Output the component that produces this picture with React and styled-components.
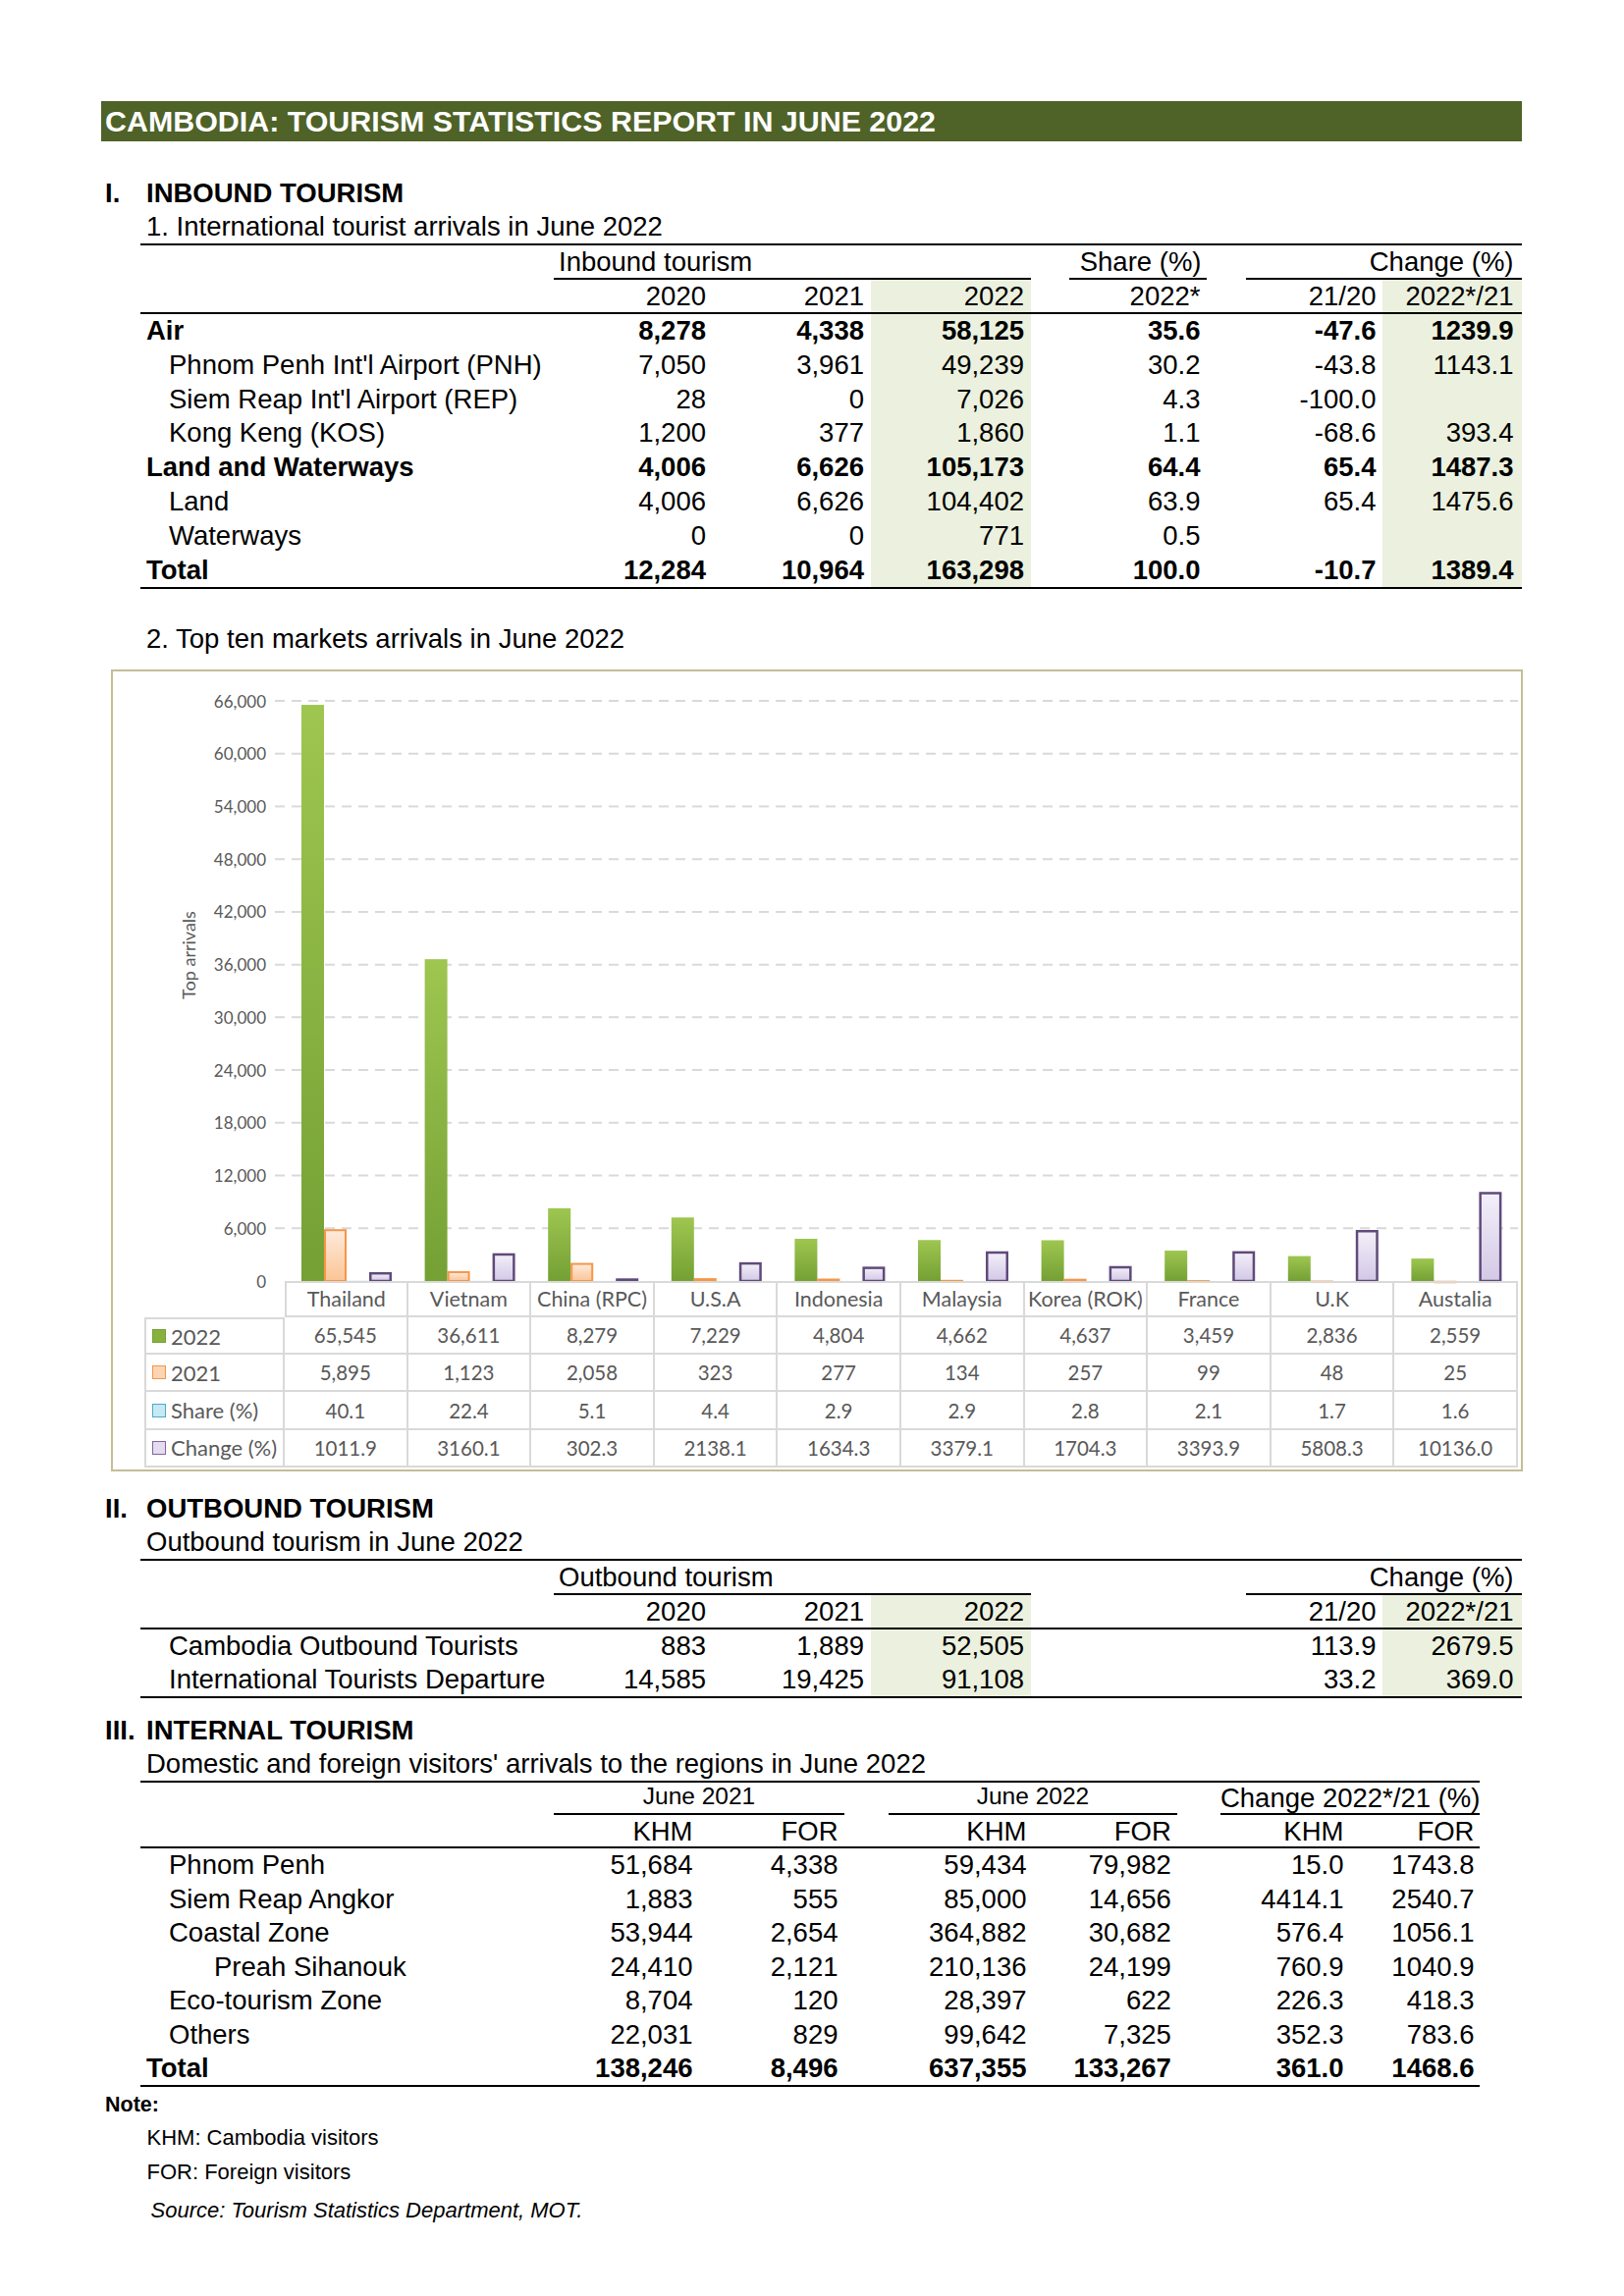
import React from 'react';
import styled, { createGlobalStyle } from 'styled-components';

const colors = {
  olive: '#4f6228',
  shade: '#ebf1de',
  chartText: '#595959',
  grid: '#d9d9d9',
  frame: '#c4bd97',
};

const GlobalStyle = createGlobalStyle`
  html, body { margin: 0; padding: 0; background: #fff; }
  body { font-family: "Liberation Sans", Arial, sans-serif; color: #000; }
  * { box-sizing: border-box; }
`;

const Page = styled.div`
  width: 1654px;
  min-height: 2339px;
  padding: 103px 104px 0 103px;
`;

const TitleBar = styled.h1`
  margin: 0;
  height: 41px;
  padding-left: 4px;
  background: ${colors.olive};
  color: #fff;
  font-size: 30.4px;
  font-weight: 700;
  line-height: 41px;
  white-space: nowrap;
`;

const SectionHead = styled.h2`
  display: flex;
  margin: ${(p) => p.$top}px 0 0;
  padding-left: 4px;
  font-size: 27.5px;
  font-weight: 700;
  line-height: 35px;
`;

const Numeral = styled.span`
  width: 42px;
  flex: none;
`;

const Subtitle = styled.div`
  margin-top: ${(p) => p.$top || 0}px;
  padding-left: 46px;
  font-size: 27.5px;
  line-height: ${(p) => p.$lh || 34}px;
  white-space: nowrap;
`;

const Table = styled.div`
  display: grid;
  grid-template-columns: ${(p) => p.$cols};
  width: max-content;
  margin-left: 40px;
  border-top: 2px solid #000;
  border-bottom: 2px solid #000;
  font-size: 27.5px;
  white-space: nowrap;
`;

const Cell = styled.div`
  grid-column: span ${(p) => p.$span || 1};
  height: ${(p) => p.$h}px;
  padding: ${(p) => p.$pt || 0}px ${(p) => p.$pr ?? 6.5}px 0 ${(p) => p.$pl || 0}px;
  line-height: ${(p) => p.$lh || p.$h}px;
  font-size: ${(p) => (p.$fs ? `${p.$fs}px` : 'inherit')};
  font-weight: ${(p) => (p.$bold ? 700 : 400)};
  text-align: ${(p) => p.$align || 'right'};
  background: ${(p) => (p.$shaded ? colors.shade : 'transparent')};
  border-bottom: ${(p) => (p.$line ? '2px solid #000' : 'none')};
`;

/* ---------- chart ---------- */

const ChartBox = styled.div`
  display: flex;
  flex-direction: column;
  width: 1438px;
  height: 817px;
  margin: 13.5px 0 0 10px;
  border: 2px solid ${colors.frame};
`;

const Plot = styled.svg`
  display: block;
  flex: none;
  overflow: visible;
`;

const AxisText = styled.text`
  font-family: Lato, "Open Sans", sans-serif;
  font-size: ${(p) => p.$fs || 17}px;
  fill: ${colors.chartText};
`;

const DataGrid = styled.div`
  display: grid;
  grid-template-columns: 32px 143px repeat(10, 125.6px);
  grid-template-rows: 37px repeat(4, 38.3px);
  font-family: Lato, "Open Sans", sans-serif;
  font-size: 20.5px;
  color: ${colors.chartText};
  white-space: nowrap;
`;

const Blank = styled.div``;

const GridCell = styled.div`
  display: flex;
  align-items: center;
  justify-content: ${(p) => (p.$legend ? 'flex-start' : 'center')};
  font-size: ${(p) => (p.$fs ? `${p.$fs}px` : 'inherit')};
  border-right: 2px solid ${colors.grid};
  border-bottom: 2px solid ${colors.grid};
  border-top: ${(p) => (p.$top ? `2px solid ${colors.grid}` : 'none')};
  border-left: ${(p) => (p.$left ? `2px solid ${colors.grid}` : 'none')};
`;

const Key = styled.span`
  flex: none;
  width: 14px;
  height: 14px;
  margin: 0 5px 0 6px;
  background: ${(p) => p.$fill};
  border: 1.5px solid ${(p) => p.$stroke};
`;

/* ---------- notes ---------- */

const Note = styled.div`
  padding-left: ${(p) => p.$pl || 0}px;
  margin-top: ${(p) => p.$top || 0}px;
  font-size: ${(p) => p.$fs || 22}px;
  font-weight: ${(p) => (p.$bold ? 700 : 400)};
  font-style: ${(p) => (p.$italic ? 'italic' : 'normal')};
  line-height: ${(p) => p.$lh || 35}px;
`;

/* ---------- data ---------- */

const T1_COLS = '421px 161.5px 161px 163px 39.5px 140px 39.5px 139.5px 141.5px';
const T3_COLS = '421px 148px 148px 44.6px 147.4px 147.3px 43.7px 132px 132px';
const INDENT = [6, 29, 75];

const inbound = [
  { label: 'Air', bold: true, v: ['8,278', '4,338', '58,125', '', '35.6', '', '-47.6', '1239.9'] },
  { label: "Phnom Penh Int'l Airport (PNH)", indent: 1, v: ['7,050', '3,961', '49,239', '', '30.2', '', '-43.8', '1143.1'] },
  { label: "Siem Reap Int'l Airport (REP)", indent: 1, v: ['28', '0', '7,026', '', '4.3', '', '-100.0', ''] },
  { label: 'Kong Keng (KOS)', indent: 1, v: ['1,200', '377', '1,860', '', '1.1', '', '-68.6', '393.4'] },
  { label: 'Land and Waterways', bold: true, v: ['4,006', '6,626', '105,173', '', '64.4', '', '65.4', '1487.3'] },
  { label: 'Land', indent: 1, v: ['4,006', '6,626', '104,402', '', '63.9', '', '65.4', '1475.6'] },
  { label: 'Waterways', indent: 1, v: ['0', '0', '771', '', '0.5', '', '', ''] },
  { label: 'Total', bold: true, v: ['12,284', '10,964', '163,298', '', '100.0', '', '-10.7', '1389.4'] },
];

const outbound = [
  { label: 'Cambodia Outbound Tourists', indent: 1, v: ['883', '1,889', '52,505', '', '', '', '113.9', '2679.5'] },
  { label: 'International Tourists Departure', indent: 1, v: ['14,585', '19,425', '91,108', '', '', '', '33.2', '369.0'] },
];

const internal = [
  { label: 'Phnom Penh', indent: 1, v: ['51,684', '4,338', '', '59,434', '79,982', '', '15.0', '1743.8'] },
  { label: 'Siem Reap Angkor', indent: 1, v: ['1,883', '555', '', '85,000', '14,656', '', '4414.1', '2540.7'] },
  { label: 'Coastal Zone', indent: 1, v: ['53,944', '2,654', '', '364,882', '30,682', '', '576.4', '1056.1'] },
  { label: 'Preah Sihanouk', indent: 2, v: ['24,410', '2,121', '', '210,136', '24,199', '', '760.9', '1040.9'] },
  { label: 'Eco-tourism Zone', indent: 1, v: ['8,704', '120', '', '28,397', '622', '', '226.3', '418.3'] },
  { label: 'Others', indent: 1, v: ['22,031', '829', '', '99,642', '7,325', '', '352.3', '783.6'] },
  { label: 'Total', bold: true, v: ['138,246', '8,496', '', '637,355', '133,267', '', '361.0', '1468.6'] },
];

const markets = [
  { name: 'Thailand', y22: 65545, y21: 5895, share: 40.1, change: 1011.9 },
  { name: 'Vietnam', y22: 36611, y21: 1123, share: 22.4, change: 3160.1 },
  { name: 'China (RPC)', y22: 8279, y21: 2058, share: 5.1, change: 302.3 },
  { name: 'U.S.A', y22: 7229, y21: 323, share: 4.4, change: 2138.1 },
  { name: 'Indonesia', y22: 4804, y21: 277, share: 2.9, change: 1634.3 },
  { name: 'Malaysia', y22: 4662, y21: 134, share: 2.9, change: 3379.1 },
  { name: 'Korea (ROK)', y22: 4637, y21: 257, share: 2.8, change: 1704.3 },
  { name: 'France', y22: 3459, y21: 99, share: 2.1, change: 3393.9 },
  { name: 'U.K', y22: 2836, y21: 48, share: 1.7, change: 5808.3 },
  { name: 'Austalia', y22: 2559, y21: 25, share: 1.6, change: 10136.0 },
];

const fmt = (n) => n.toLocaleString('en-US');

const legend = [
  { label: '2022', fill: '#86b13f', stroke: '#77a035', value: (m) => fmt(m.y22) },
  { label: '2021', fill: '#fcd5b5', stroke: '#f79646', value: (m) => fmt(m.y21) },
  { label: 'Share (%)', fill: '#c6e9f3', stroke: '#4bacc6', value: (m) => m.share.toFixed(1) },
  { label: 'Change (%)', fill: '#e4dcef', stroke: '#8064a2', value: (m) => m.change.toFixed(1) },
];

/* ---------- pieces ---------- */

const BodyRows = ({ rows, h, shaded = [], lastPad = 6.5 }) =>
  rows.map((r) => (
    <React.Fragment key={r.label}>
      <Cell $h={h} $align="left" $pl={INDENT[r.indent || 0]} $pr={0} $bold={r.bold}>
        {r.label}
      </Cell>
      {r.v.map((v, i) => (
        <Cell
          key={i}
          $h={h}
          $bold={r.bold}
          $shaded={shaded.includes(i + 1)}
          $pr={i === r.v.length - 1 ? lastPad : 6.5}
        >
          {v}
        </Cell>
      ))}
    </React.Fragment>
  ));

const HeadRow = ({ cells, h, lh, pt, shaded = [], lastPad = 6.5 }) =>
  cells.map((c, i) => (
    <Cell
      key={i}
      $h={h}
      $lh={lh}
      $pt={pt}
      $line
      $shaded={shaded.includes(i)}
      $pr={i === cells.length - 1 ? lastPad : 6.5}
    >
      {c}
    </Cell>
  ));

const PLOT_W = 1434;
const PLOT_H = 621;
const SCALE = 591 / 66000;
const BAR_W = 23;
const catX = (i) => 175 + i * 125.6;

const Bar = ({ x, value, fill, stroke, sw = 2 }) => {
  const h = value * SCALE;
  if (!stroke) return <rect x={x} y={PLOT_H - h} width={BAR_W} height={h} fill={fill} />;
  return (
    <rect
      x={x + sw / 2}
      y={PLOT_H - h + sw / 2}
      width={BAR_W - sw}
      height={Math.max(h - sw / 2, 0.5)}
      fill={fill}
      stroke={stroke}
      strokeWidth={sw}
    />
  );
};

const MarketsChart = () => {
  const ticks = Array.from({ length: 12 }, (_, k) => k);
  return (
    <ChartBox>
      <Plot width={PLOT_W} height={PLOT_H} viewBox={`0 0 ${PLOT_W} ${PLOT_H}`}>
        <defs>
          <linearGradient id="g22" x1="0" y1="0" x2="0" y2="1">
            <stop offset="0" stopColor="#9ec650" />
            <stop offset="1" stopColor="#74a034" />
          </linearGradient>
          <linearGradient id="g21" x1="0" y1="0" x2="0" y2="1">
            <stop offset="0" stopColor="#feeadb" />
            <stop offset="1" stopColor="#fbc596" />
          </linearGradient>
          <linearGradient id="gch" x1="0" y1="0" x2="0" y2="1">
            <stop offset="0" stopColor="#f3eff9" />
            <stop offset="1" stopColor="#d3c8e6" />
          </linearGradient>
        </defs>
        {ticks.slice(1).map((k) => (
          <line
            key={k}
            x1={165}
            x2={1431}
            y1={PLOT_H - k * 6000 * SCALE}
            y2={PLOT_H - k * 6000 * SCALE}
            stroke={colors.grid}
            strokeWidth={2}
            strokeDasharray="10 7"
          />
        ))}
        {ticks.map((k) => (
          <AxisText key={k} x={156} y={PLOT_H - k * 6000 * SCALE} textAnchor="end" dominantBaseline="central">
            {fmt(k * 6000)}
          </AxisText>
        ))}
        <AxisText $fs={18} transform="translate(77 289) rotate(-90)" textAnchor="middle" dominantBaseline="central">
          Top arrivals
        </AxisText>
        {markets.map((m, i) => {
          const x = catX(i);
          return (
            <g key={m.name}>
              <Bar x={x + 17} value={m.y22} fill="url(#g22)" />
              <Bar x={x + 40} value={m.y21} fill="url(#g21)" stroke="#f79646" />
              <Bar x={x + 63} value={m.share} fill="#c6e9f3" />
              <Bar x={x + 86} value={m.change} fill="url(#gch)" stroke="#604a7b" sw={2.5} />
            </g>
          );
        })}
      </Plot>
      <DataGrid>
        <Blank />
        <Blank />
        {markets.map((m, i) => (
          <GridCell key={m.name} $fs={21.5} $top $left={i === 0}>
            {m.name}
          </GridCell>
        ))}
        {legend.map((s, r) => (
          <React.Fragment key={s.label}>
            <Blank />
            <GridCell $legend $fs={22} $left $top={r === 0}>
              <Key $fill={s.fill} $stroke={s.stroke} />
              {s.label}
            </GridCell>
            {markets.map((m) => (
              <GridCell key={m.name}>{s.value(m)}</GridCell>
            ))}
          </React.Fragment>
        ))}
      </DataGrid>
    </ChartBox>
  );
};

/* ---------- page ---------- */

const App = () => (
  <Page>
    <GlobalStyle />
    <TitleBar>CAMBODIA: TOURISM STATISTICS REPORT IN JUNE 2022</TitleBar>

    <SectionHead $top={35}>
      <Numeral>I.</Numeral>INBOUND TOURISM
    </SectionHead>
    <Subtitle>1. International tourist arrivals in June 2022</Subtitle>
    <Table $cols={T1_COLS}>
      <Cell $h={35} />
      <Cell $h={35} $lh={33} $span={3} $align="left" $pl={5} $line>
        Inbound tourism
      </Cell>
      <Cell $h={35} />
      <Cell $h={35} $lh={33} $pr={5.5} $line>
        Share (%)
      </Cell>
      <Cell $h={35} />
      <Cell $h={35} $lh={33} $span={2} $pr={8} $line>
        Change (%)
      </Cell>
      <HeadRow
        cells={['', '2020', '2021', '2022', '', '2022*', '', '21/20', '2022*/21']}
        h={35}
        lh={33}
        shaded={[3, 8]}
        lastPad={8}
      />
      <BodyRows rows={inbound} h={34.8} shaded={[3, 8]} lastPad={8} />
    </Table>

    <Subtitle $top={33} $lh={35}>
      2. Top ten markets arrivals in June 2022
    </Subtitle>
    <MarketsChart />

    <SectionHead $top={20}>
      <Numeral>II.</Numeral>OUTBOUND TOURISM
    </SectionHead>
    <Subtitle>Outbound tourism in June 2022</Subtitle>
    <Table $cols={T1_COLS}>
      <Cell $h={35} />
      <Cell $h={35} $lh={33} $span={3} $align="left" $pl={5} $line>
        Outbound tourism
      </Cell>
      <Cell $h={35} />
      <Cell $h={35} />
      <Cell $h={35} />
      <Cell $h={35} $lh={33} $span={2} $pr={8} $line>
        Change (%)
      </Cell>
      <HeadRow
        cells={['', '2020', '2021', '2022', '', '', '', '21/20', '2022*/21']}
        h={35}
        lh={33}
        shaded={[3, 8]}
        lastPad={8}
      />
      <BodyRows rows={outbound} h={34.3} shaded={[3, 8]} lastPad={8} />
    </Table>

    <SectionHead $top={15}>
      <Numeral>III.</Numeral>INTERNAL TOURISM
    </SectionHead>
    <Subtitle>Domestic and foreign visitors&apos; arrivals to the regions in June 2022</Subtitle>
    <Table $cols={T3_COLS}>
      <Cell $h={33} />
      <Cell $h={33} $lh={28} $fs={24.5} $span={2} $align="center" $pr={0} $line>
        June 2021
      </Cell>
      <Cell $h={33} />
      <Cell $h={33} $lh={28} $fs={24.5} $span={2} $align="center" $pr={0} $line>
        June 2022
      </Cell>
      <Cell $h={33} />
      <Cell $h={33} $lh={31} $span={2} $pr={4.5} $line>
        Change 2022*/21 (%)
      </Cell>
      <HeadRow
        cells={['', 'KHM', 'FOR', '', 'KHM', 'FOR', '', 'KHM', 'FOR']}
        h={34}
        lh={32}
        pt={1}
        lastPad={5.5}
      />
      <BodyRows rows={internal} h={34.43} lastPad={5.5} />
    </Table>

    <Note $bold $fs={21.5} $lh={32.5} $top={1.5} $pl={4}>
      Note:
    </Note>
    <Note $pl={46.5}>KHM: Cambodia visitors</Note>
    <Note $pl={46.5}>FOR: Foreign visitors</Note>
    <Note $pl={50.5} $top={3.5} $italic>
      Source: Tourism Statistics Department, MOT.
    </Note>
  </Page>
);

export default App;
